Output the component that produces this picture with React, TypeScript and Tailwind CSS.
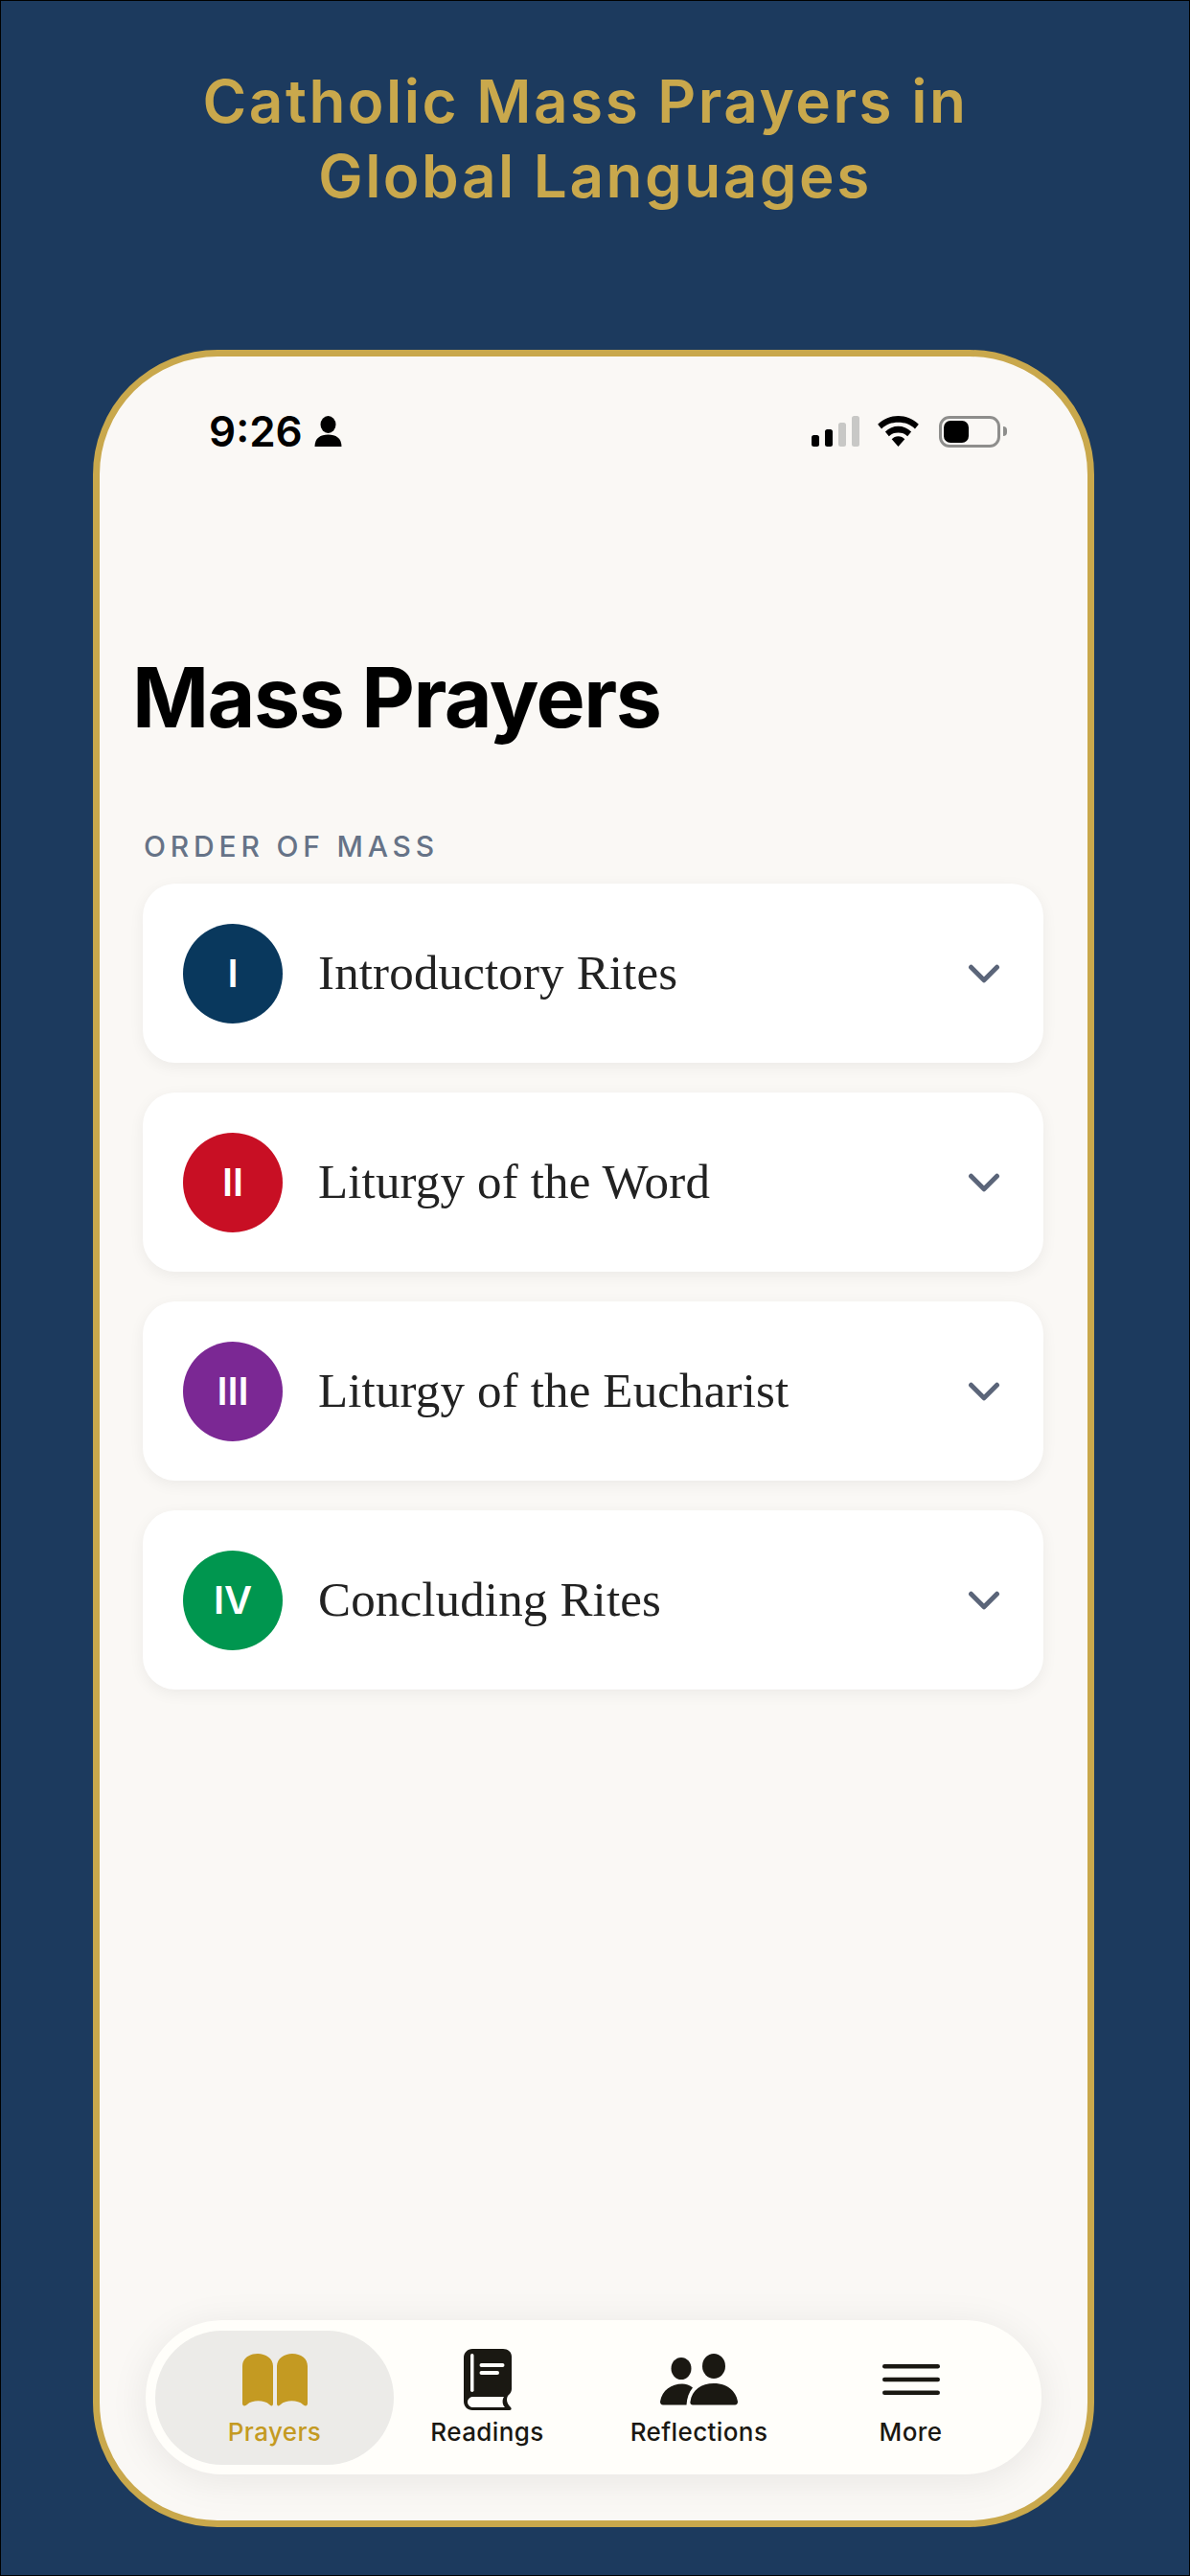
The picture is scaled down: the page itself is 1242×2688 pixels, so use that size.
import type { ReactNode } from "react";
import { ChevronDown } from "lucide-react";

const rites = [
  { numeral: "I", title: "Introductory Rites", color: "bg-[#09385d]" },
  { numeral: "II", title: "Liturgy of the Word", color: "bg-[#c80f24]" },
  { numeral: "III", title: "Liturgy of the Eucharist", color: "bg-[#7b2894]" },
  { numeral: "IV", title: "Concluding Rites", color: "bg-[#00964f]" },
];

function BookOpenIcon() {
  return (
    <svg width="68" height="55" viewBox="0 0 68 55" fill="#c49a22">
      <path d="M0 13 C0 5 7 0 16 0 C24 0 32 5 32 13 V52 C32 55 30 55 28 53 C23 48 10 48 5 53 C3 55 0 55 0 52 Z" />
      <path d="M36 13 C36 5 44 0 52 0 C61 0 68 5 68 13 V52 C68 55 65 55 63 53 C58 48 45 48 40 53 C38 55 36 55 36 52 Z" />
    </svg>
  );
}

function BookIcon() {
  return (
    <svg width="50" height="64" viewBox="0 0 50 64">
      <path
        fill="#1a1812"
        d="M9 0 H41 C46 0 50 3 50 8 V42 C50 45 48 47 46 49 C44 53 45 57 49 61 C50 62 50 64 48 64 H9 C4 64 0 60 0 55 V9 C0 4 4 0 9 0 Z"
      />
      <path fill="#fffefa" d="M10 50 C7 50 4 52 4 55.5 C4 59 7 61 10 61 H43 C40 58 40 53 42 50 Z" />
      <rect x="7" y="5" width="3.5" height="40" rx="1.75" fill="#fffefa" />
      <rect x="16.5" y="15" width="26" height="4" rx="2" fill="#fffefa" />
      <rect x="16.5" y="23" width="20.5" height="4" rx="2" fill="#fffefa" />
    </svg>
  );
}

function PeopleIcon() {
  return (
    <svg width="81" height="54" viewBox="0 0 81 54" fill="#1a1812">
      <ellipse cx="22" cy="15.5" rx="10.5" ry="11.5" />
      <ellipse cx="56" cy="13" rx="12" ry="13" />
      <path d="M0 50 C2 38 12 31.5 23 31.5 C27 31.5 31 33 34 35.5 C30 40 28 46 27.5 53.5 H3 C1 53.5 0 52 0 50 Z" />
      <path d="M56 31 C69 31 79 38 81 50 C81 52 80 53.5 78 53.5 H34 C32 53.5 31 52 31.5 50 C33 38 43 31 56 31 Z" />
    </svg>
  );
}

function MenuIcon() {
  return (
    <svg width="60" height="32" viewBox="0 0 60 32" fill="#1a1812">
      <rect y="0" width="60" height="4.5" rx="2.25" />
      <rect y="13.75" width="60" height="4.5" rx="2.25" />
      <rect y="27.5" width="60" height="4.5" rx="2.25" />
    </svg>
  );
}

function StatusBar() {
  return (
    <div className="flex h-[60px] items-center justify-between pl-[114px] pr-[84px]">
      <div className="flex items-center gap-[12px]">
        <span className="font-['Inter',sans-serif] text-[44px] font-semibold leading-none text-black">9:26</span>
        <svg width="29" height="32" viewBox="0 0 28 32" fill="#000">
          <ellipse cx="14" cy="9" rx="8" ry="9" />
          <path d="M0 32 C0 23 6 19.5 14 19.5 C22 19.5 28 23 28 32 Z" />
        </svg>
      </div>
      <div className="flex items-center gap-[19px]">
        <svg width="50" height="32" viewBox="0 0 50 32">
          <rect x="0" y="20" width="8" height="12" rx="2.5" fill="#000" />
          <rect x="14" y="14" width="8" height="18" rx="2.5" fill="#000" />
          <rect x="28" y="7" width="8" height="25" rx="2.5" fill="#c8c8c6" />
          <rect x="42" y="0" width="8" height="32" rx="2.5" fill="#c8c8c6" />
        </svg>
        <div className="flex items-center gap-[21px]">
          <svg width="43" height="32" viewBox="0 0 44 33" fill="#000">
            <path d="M22 0 C30 0 38 3 44 9 L40 14 C35 9 29 7 22 7 C15 7 9 9 4 14 L0 9 C6 3 14 0 22 0 Z" />
            <path d="M22 11 C27 11 32 13 36 17 L32 22 C29 19 26 18 22 18 C18 18 15 19 12 22 L8 17 C12 13 17 11 22 11 Z" />
            <path d="M22 22 C25 22 27 23 29 25 L22 33 L15 25 C17 23 19 22 22 22 Z" />
          </svg>
          <div className="flex items-center gap-[3px]">
            <div className="flex h-[33px] w-[64px] items-center rounded-[11px] border-[3px] border-[#8e8e8c] p-[2px]">
              <div className="h-full w-[26px] rounded-[7px] bg-black" />
            </div>
            <div className="h-[10px] w-[4px] rounded-r-full bg-[#8e8e8c]" />
          </div>
        </div>
      </div>
    </div>
  );
}

function RiteCard({ numeral, title, color }: { numeral: string; title: string; color: string }) {
  return (
    <div className="flex h-[187px] items-center rounded-[34px] bg-white pl-[42px] pr-[35px] shadow-[0_4px_16px_rgba(0,0,0,0.06)]">
      <div
        className={`flex h-[104px] w-[104px] shrink-0 items-center justify-center rounded-full ${color} font-['Inter',sans-serif] text-[40px] font-semibold text-white`}
      >
        {numeral}
      </div>
      <span className="ml-[37px] flex-1 font-['Liberation_Serif',serif] text-[51px] leading-none tracking-[0.15px] text-[#222222]">
        {title}
      </span>
      <ChevronDown size={54} strokeWidth={2.2} className="text-[#5b6579]" />
    </div>
  );
}

function TabItem({ label, active, children }: { label: string; active?: boolean; children: ReactNode }) {
  return (
    <div
      className={`flex h-[140px] flex-col items-center rounded-[70px] ${active ? "-ml-[15px] -mr-[13px] bg-[#ecebe8] text-[#c49a22]" : "text-[#1a1812]"}`}
    >
      <div className="flex h-[90px] items-center pt-[13px]">{children}</div>
      <span className="font-['Inter',sans-serif] text-[26px] font-[450] leading-[32px] tracking-[0.4px]">{label}</span>
    </div>
  );
}

export default function App() {
  return (
    <div className="flex h-[2688px] w-[1242px] flex-col border border-black bg-[#1c3a5e]">
      <h1 className="mt-[66px] text-center font-['Inter',sans-serif] text-[62px] font-semibold leading-[78px] tracking-[2.5px] text-[#c9a84c]">
        <span className="block pr-[20px]">Catholic Mass Prayers in</span>
        <span className="block">Global Languages</span>
      </h1>
      <div className="mt-[142px] ml-[96px] flex h-[2272px] w-[1045px] flex-col overflow-hidden rounded-[130px] border-[7px] border-[#c9a84c] bg-[#faf8f5]">
        <div className="pt-[48px]">
          <StatusBar />
        </div>
        <h2 className="mt-[198px] pl-[34px] font-['Inter',sans-serif] text-[86px] font-bold leading-[100px] tracking-[-1.5px] text-black">
          Mass Prayers
        </h2>
        <p className="mt-[87px] pl-[46px] font-['Inter',sans-serif] text-[30px] font-medium leading-[36px] tracking-[4.8px] text-[#667387]">
          ORDER OF MASS
        </p>
        <div className="mt-[21px] flex flex-col gap-[31px] pl-[45px] pr-[46px]">
          {rites.map((rite) => (
            <RiteCard key={rite.numeral} {...rite} />
          ))}
        </div>
        <div className="mt-auto mb-[48px] ml-[48px] grid h-[161px] w-[935px] grid-cols-[repeat(4,221px)] items-center rounded-[80px] bg-[#fffefa] pl-[25px] shadow-[0_6px_40px_rgba(0,0,0,0.08)]">
          <TabItem label="Prayers" active>
            <BookOpenIcon />
          </TabItem>
          <TabItem label="Readings">
            <BookIcon />
          </TabItem>
          <TabItem label="Reflections">
            <PeopleIcon />
          </TabItem>
          <TabItem label="More">
            <MenuIcon />
          </TabItem>
        </div>
      </div>
    </div>
  );
}
